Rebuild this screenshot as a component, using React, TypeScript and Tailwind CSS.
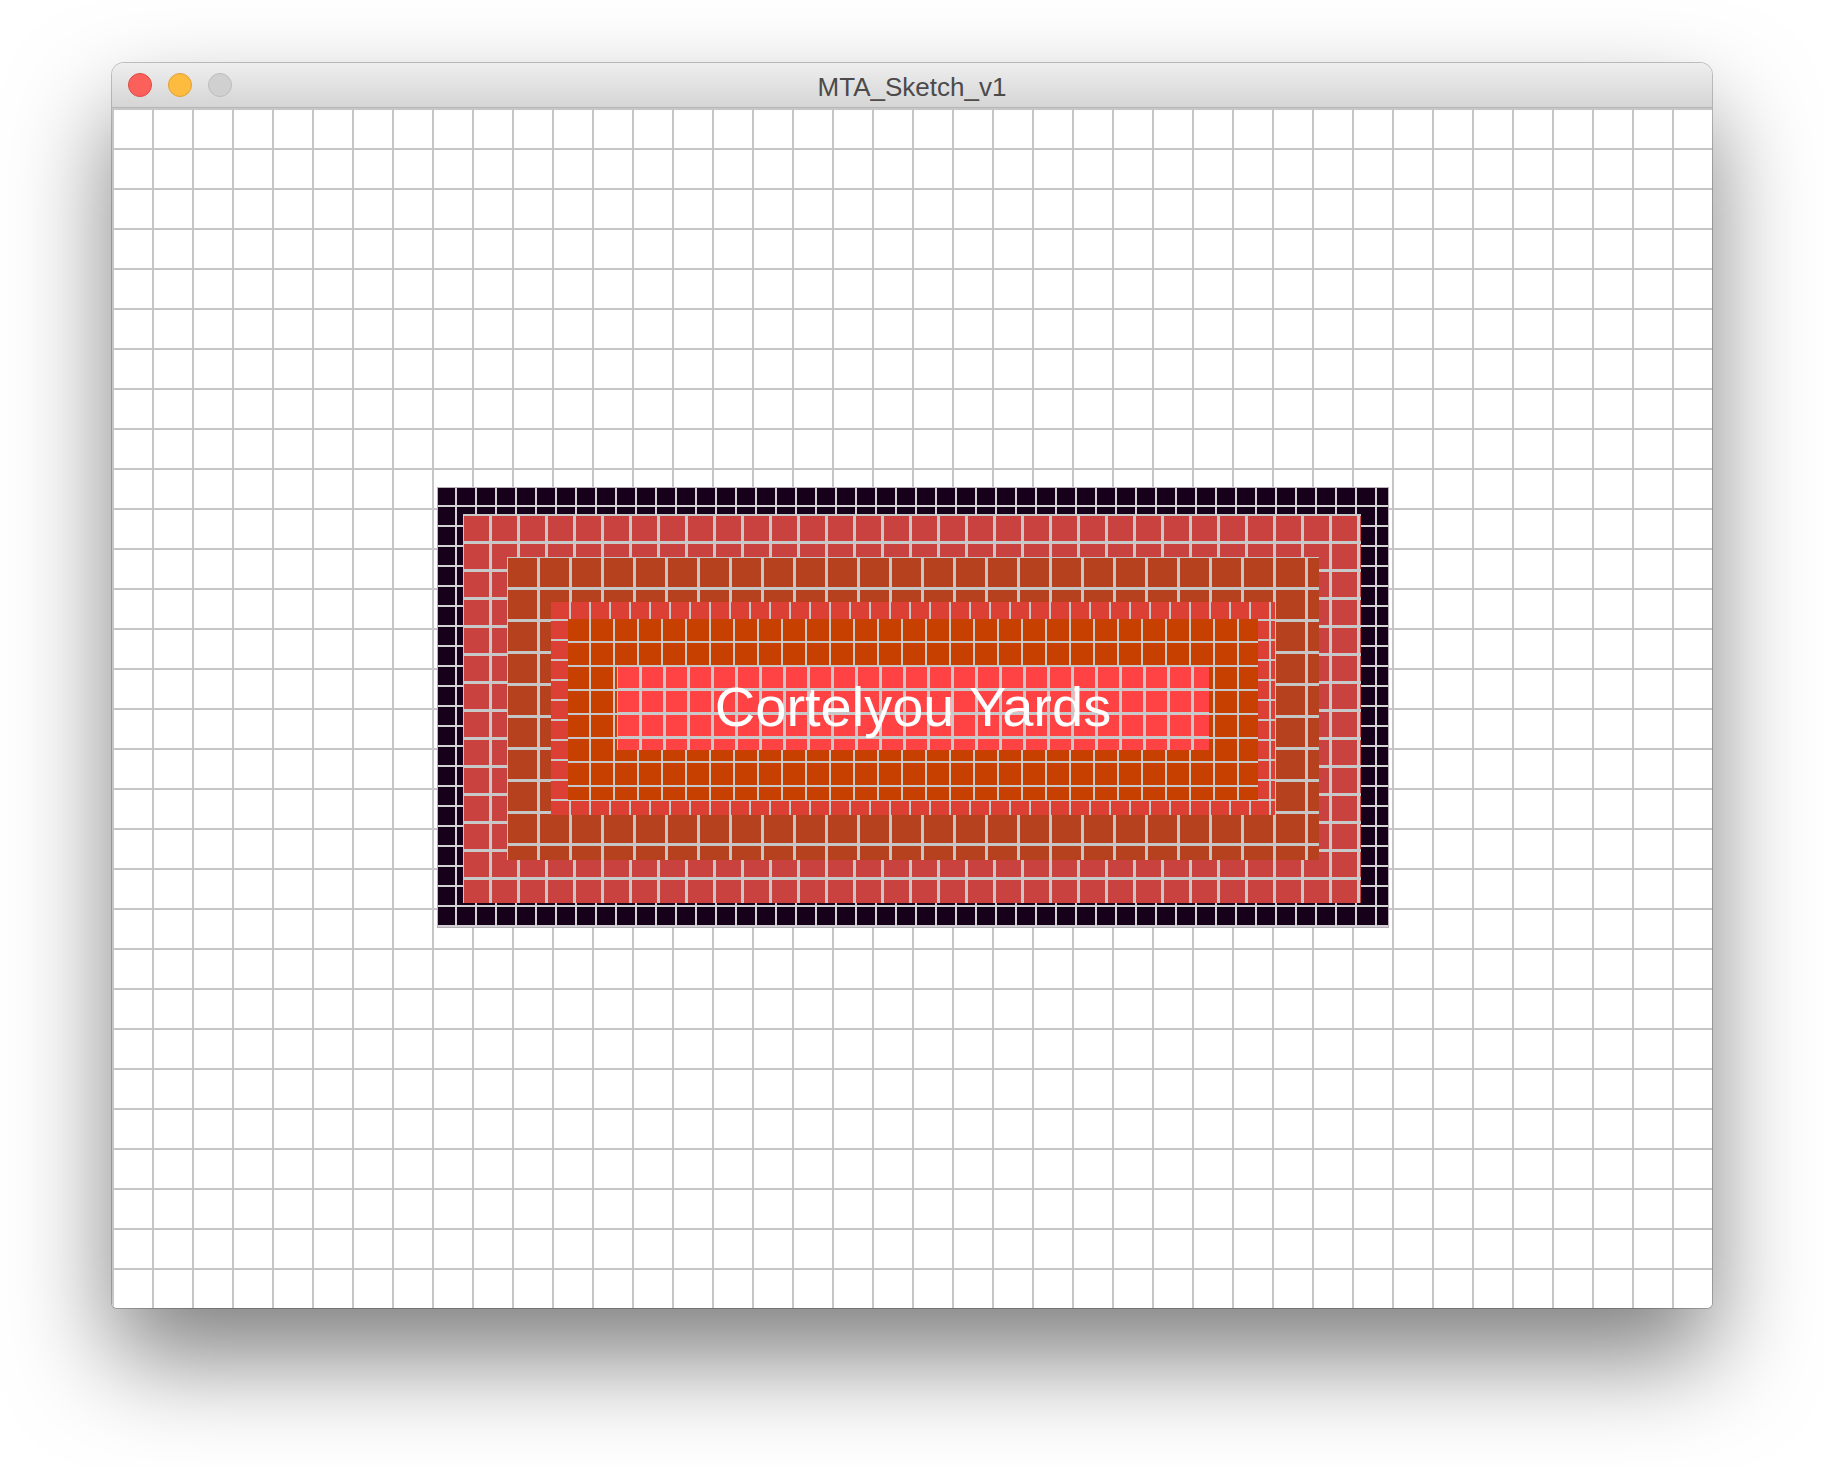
const lights = [
  { name: "close", className: "bg-[#fc605b] border-[#de4a45]" },
  { name: "minimize", className: "bg-[#fdbc40] border-[#dfa036]" },
  { name: "zoom", className: "bg-[#d0d0d0] border-[#bcbcbc]" },
];

function TitleBar() {
  return (
    <div className="grid h-[45px] grid-cols-[1fr_auto_1fr] items-center border-b border-[#b6b6b6] bg-[linear-gradient(to_bottom,#eeeeee,#d5d5d5)] px-[16px]">
      <div className="flex items-center gap-[16px]">
        {lights.map((l) => (
          <span key={l.name} className={`block h-[24px] w-[24px] rounded-full border-[1.5px] ${l.className}`} />
        ))}
      </div>
      <span className="pt-1 text-[26px] text-[#4b4b4b]">MTA_Sketch_v1</span>
      <div />
    </div>
  );
}

// yard drawing: nested rects, each one with its own line grid
function Yard() {
  return (
    <div className="h-[441px] w-[952px] bg-[#17011a] bg-[linear-gradient(to_right,#d2d2d2_2px,transparent_2px),linear-gradient(to_bottom,#d2d2d2_2px,transparent_2px)] pl-[26px] pt-[27px] shadow-[inset_0_0_0_1px_#b9b0ba] [background-position:18px_18px] [background-size:20px_20px]">
      <div className="h-[389px] w-[898px] bg-[#c94240] bg-[linear-gradient(to_right,#c8c8c8_3px,transparent_3px),linear-gradient(to_bottom,#c8c8c8_3px,transparent_3px)] pl-[44px] pt-[43px] [background-position:26px_27px] [background-size:28px_28px]">
        <div className="h-[303px] w-[812px] bg-[#b5411f] bg-[linear-gradient(to_right,#c6c6c6_3px,transparent_3px),linear-gradient(to_bottom,#c6c6c6_3px,transparent_3px)] pl-[44px] pt-[45px] [background-position:30px_30px] [background-size:32px_32px]">
          <div className="h-[213px] w-[724px] bg-[#dc4035] bg-[linear-gradient(to_right,#c8c8c8_2px,transparent_2px),linear-gradient(to_bottom,#c8c8c8_2px,transparent_2px)] pl-[17px] pt-[17px] [background-position:18px_17px] [background-size:20px_20px]">
            <div className="h-[181px] w-[690px] bg-[#c84000] bg-[linear-gradient(to_right,#c8c8c8_2px,transparent_2px),linear-gradient(to_bottom,#c8c8c8_2px,transparent_2px)] pl-[49px] pt-[48px] [background-position:21px_22px] [background-size:24px_24px]">
              <div className="flex h-[83px] w-[592px] items-center justify-center bg-[#ff4244] bg-[linear-gradient(to_right,#c8c8c8_3px,transparent_3px),linear-gradient(to_bottom,#c8c8c8_3px,transparent_3px)] [background-position:22px_21px] [background-size:24px_24px]">
                <span className="mb-1 text-[56px] leading-none text-white">Cortelyou Yards</span>
              </div>
            </div>
          </div>
        </div>
      </div>
    </div>
  );
}

export default function App() {
  return (
    <div className="h-[1468px] w-full overflow-hidden bg-white pt-[63px] font-['Liberation_Sans',Arial,sans-serif]">
      <div className="mx-auto w-[1600px] overflow-hidden rounded-t-[12px] rounded-b-[5px] shadow-[0_50px_100px_rgba(0,0,0,0.5),0_0_0_1px_rgba(0,0,0,0.22)]">
        <TitleBar />
        <div className="h-[1200px] bg-white bg-[linear-gradient(to_right,#c6c6c6_2px,transparent_2px),linear-gradient(to_bottom,#c6c6c6_2px,transparent_2px)] pl-[325px] pt-[379px] [background-size:40px_40px]">
          <Yard />
        </div>
      </div>
    </div>
  );
}
